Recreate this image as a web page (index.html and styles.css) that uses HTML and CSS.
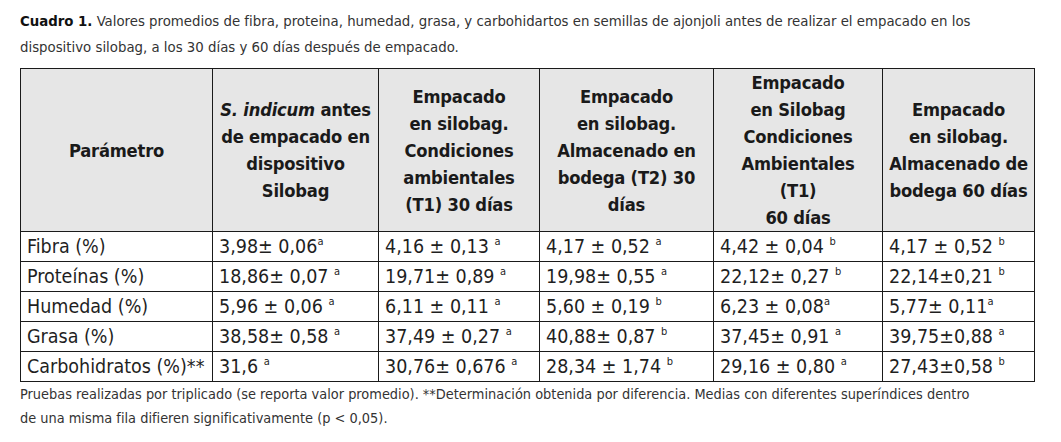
FILE: index.html
```html
<!DOCTYPE html>
<html lang="es">
<head>
<meta charset="utf-8">
<link rel="stylesheet" href="styles.css">
</head>
<body>
<div class="page">
  <p class="caption"><b>Cuadro 1.</b> Valores promedios de fibra, proteina, humedad, grasa, y carbohidartos en semillas de ajonjoli antes de realizar el empacado en los dispositivo silobag, a los 30 días y 60 días después de empacado.</p>
  <table class="data">
    <colgroup>
      <col class="c1"><col class="c2"><col class="c3"><col class="c4"><col class="c5"><col class="c6">
    </colgroup>
    <thead>
      <tr>
        <th>Parámetro</th>
        <th><i>S. indicum</i> antes<br>de empacado en<br>dispositivo<br>Silobag</th>
        <th>Empacado<br>en silobag.<br>Condiciones<br>ambientales<br>(T1) 30 días</th>
        <th>Empacado<br>en silobag.<br>Almacenado en<br>bodega (T2) 30<br>días</th>
        <th>Empacado<br>en Silobag<br>Condiciones<br>Ambientales<br>(T1)<br>60 días</th>
        <th>Empacado<br>en silobag.<br>Almacenado de<br>bodega 60 días</th>
      </tr>
    </thead>
    <tbody>
      <tr><td>Fibra (%)</td><td>3,98± 0,06<sup>a</sup></td><td>4,16 ± 0,13 <sup>a</sup></td><td>4,17 ± 0,52 <sup>a</sup></td><td>4,42 ± 0,04 <sup>b</sup></td><td>4,17 ± 0,52 <sup>b</sup></td></tr>
      <tr><td>Proteínas (%)</td><td>18,86± 0,07 <sup>a</sup></td><td>19,71± 0,89 <sup>a</sup></td><td>19,98± 0,55 <sup>a</sup></td><td>22,12± 0,27 <sup>b</sup></td><td>22,14±0,21 <sup>b</sup></td></tr>
      <tr><td>Humedad (%)</td><td>5,96 ± 0,06 <sup>a</sup></td><td>6,11 ± 0,11 <sup>a</sup></td><td>5,60 ± 0,19 <sup>b</sup></td><td>6,23 ± 0,08<sup>a</sup></td><td>5,77± 0,11<sup>a</sup></td></tr>
      <tr><td>Grasa (%)</td><td>38,58± 0,58 <sup>a</sup></td><td>37,49 ± 0,27 <sup>a</sup></td><td>40,88± 0,87 <sup>b</sup></td><td>37,45± 0,91 <sup>a</sup></td><td>39,75±0,88 <sup>a</sup></td></tr>
      <tr><td>Carbohidratos (%)**</td><td>31,6 <sup>a</sup></td><td>30,76± 0,676 <sup>a</sup></td><td>28,34 ± 1,74 <sup>b</sup></td><td>29,16 ± 0,80 <sup>a</sup></td><td>27,43±0,58 <sup>b</sup></td></tr>
    </tbody>
  </table>
  <p class="note">Pruebas realizadas por triplicado (se reporta valor promedio). **Determinación obtenida por diferencia. Medias con diferentes superíndices dentro<br>de una misma fila difieren significativamente (p &lt; 0,05).</p>
</div>
</body>
</html>
```
FILE: styles.css
```css
html, body {
  margin: 0;
  padding: 0;
  background: #fff;
}
body {
  font-family: "DejaVu Sans Condensed", "Liberation Sans", sans-serif;
  color: #222;
}
.page {
  padding: 8px 0 0 20px;
  width: 1020px;
}
.caption {
  margin: 0;
  font-size: 14.8px;
  line-height: 26px;
  color: #333;
}
.caption b {
  color: #111;
}
.data {
  border-collapse: collapse;
  margin-top: 8px;
  width: 1014px;
  table-layout: fixed;
}
.c1 { width: 192px; }
.c2 { width: 166px; }
.c3 { width: 161px; }
.c4 { width: 174px; }
.c5 { width: 169px; }
.c6 { width: 152px; }
.data th, .data td {
  border: 1.5px solid #1a1a1a;
}
.data th {
  background: #e6e6e6;
  font-weight: bold;
  font-size: 18.2px;
  letter-spacing: -0.2px;
  line-height: 27px;
  height: 162px;
  padding: 0 2px;
  text-align: center;
  vertical-align: middle;
  white-space: nowrap;
  color: #1a1a1a;
}
.data th i {
  font-style: italic;
}
.data td {
  font-size: 19.5px;
  line-height: 27px;
  height: 27px;
  padding: 1px 6px 1px;
  text-align: left;
  white-space: nowrap;
  color: #1f1f1f;
}
.data sup {
  font-size: 11px;
  vertical-align: 8px;
  line-height: 0;
}
.note {
  margin: 0;
  font-size: 14.4px;
  line-height: 24px;
  color: #333;
}
```
